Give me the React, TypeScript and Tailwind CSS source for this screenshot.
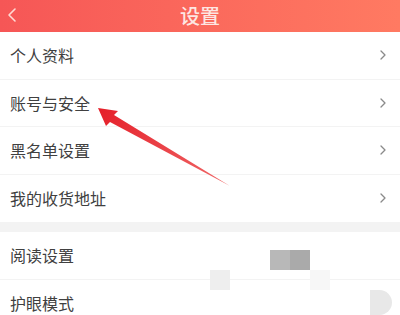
import React from 'react';

const font = { fontFamily: '"Noto Sans CJK SC", "Noto Sans", sans-serif' };

const Chevron = () => (
  <svg width="8" height="12" viewBox="0 0 8 12" className="text-[#8a8a8a]">
    <polyline points="2,2 6,6 2,10" fill="none" stroke="currentColor" strokeWidth="1.3" strokeLinecap="round" strokeLinejoin="round" />
  </svg>
);

const Row: React.FC<{ label: string; last?: boolean; chevron?: boolean }> = ({ label, last, chevron = true }) => (
  <div className={`h-[47.5px] flex items-center justify-between pl-[10px] pr-[13px] ${last ? '' : 'border-b border-[#f3f3f3]'}`}>
    <span className="text-[16px] text-[#404040] leading-none">{label}</span>
    {chevron && <Chevron />}
  </div>
);

export default function App() {
  return (
    <div className="relative w-[400px] h-[315px] overflow-hidden bg-white" style={font}>
      {/* Header */}
      <div className="relative h-[32px] flex items-center justify-center bg-gradient-to-r from-[#f65656] to-[#ff7a62]">
        <svg width="10" height="16" viewBox="0 0 10 16" className="absolute left-[7px] top-[7px]">
          <polyline points="8,2 2,8 8,14" fill="none" stroke="#ffd9d3" strokeWidth="1.6" strokeLinecap="round" strokeLinejoin="round" />
        </svg>
        <span className="text-[20px] text-[#fde6e2] leading-none font-medium">设置</span>
      </div>

      <Row label="个人资料" />
      <Row label="账号与安全" />
      <Row label="黑名单设置" />
      <Row label="我的收货地址" last />

      <div className="h-[10px] bg-[#f3f3f3]" />

      <Row label="阅读设置" chevron={false} />
      <Row label="护眼模式" last chevron={false} />

      {/* mosaic blur blocks */}
      <div className="absolute left-[270px] top-[250px] w-[20px] h-[20px] bg-[#b8b8b8]" />
      <div className="absolute left-[290px] top-[250px] w-[20px] h-[20px] bg-[#aaaaaa]" />
      <div className="absolute left-[210px] top-[270px] w-[20px] h-[20px] bg-[#eeeeee]" />
      <div className="absolute left-[310px] top-[270px] w-[20px] h-[20px] bg-[#f7f7f7]" />
      <div className="absolute left-[370px] top-[290px] w-[22px] h-[25px] rounded-r-full bg-[#e8e8e8]" />

      {/* red arrow */}
      <svg className="absolute left-0 top-0 pointer-events-none" width="400" height="315" viewBox="0 0 400 315">
        <defs>
          <linearGradient id="ag" x1="100" y1="110" x2="230" y2="185" gradientUnits="userSpaceOnUse">
            <stop offset="0" stopColor="#e5202a" />
            <stop offset="1" stopColor="#f06868" />
          </linearGradient>
        </defs>
        <polygon points="230,186 110,122 106,126 98,108 118,111 114,115" fill="url(#ag)" />
      </svg>
    </div>
  );
}
